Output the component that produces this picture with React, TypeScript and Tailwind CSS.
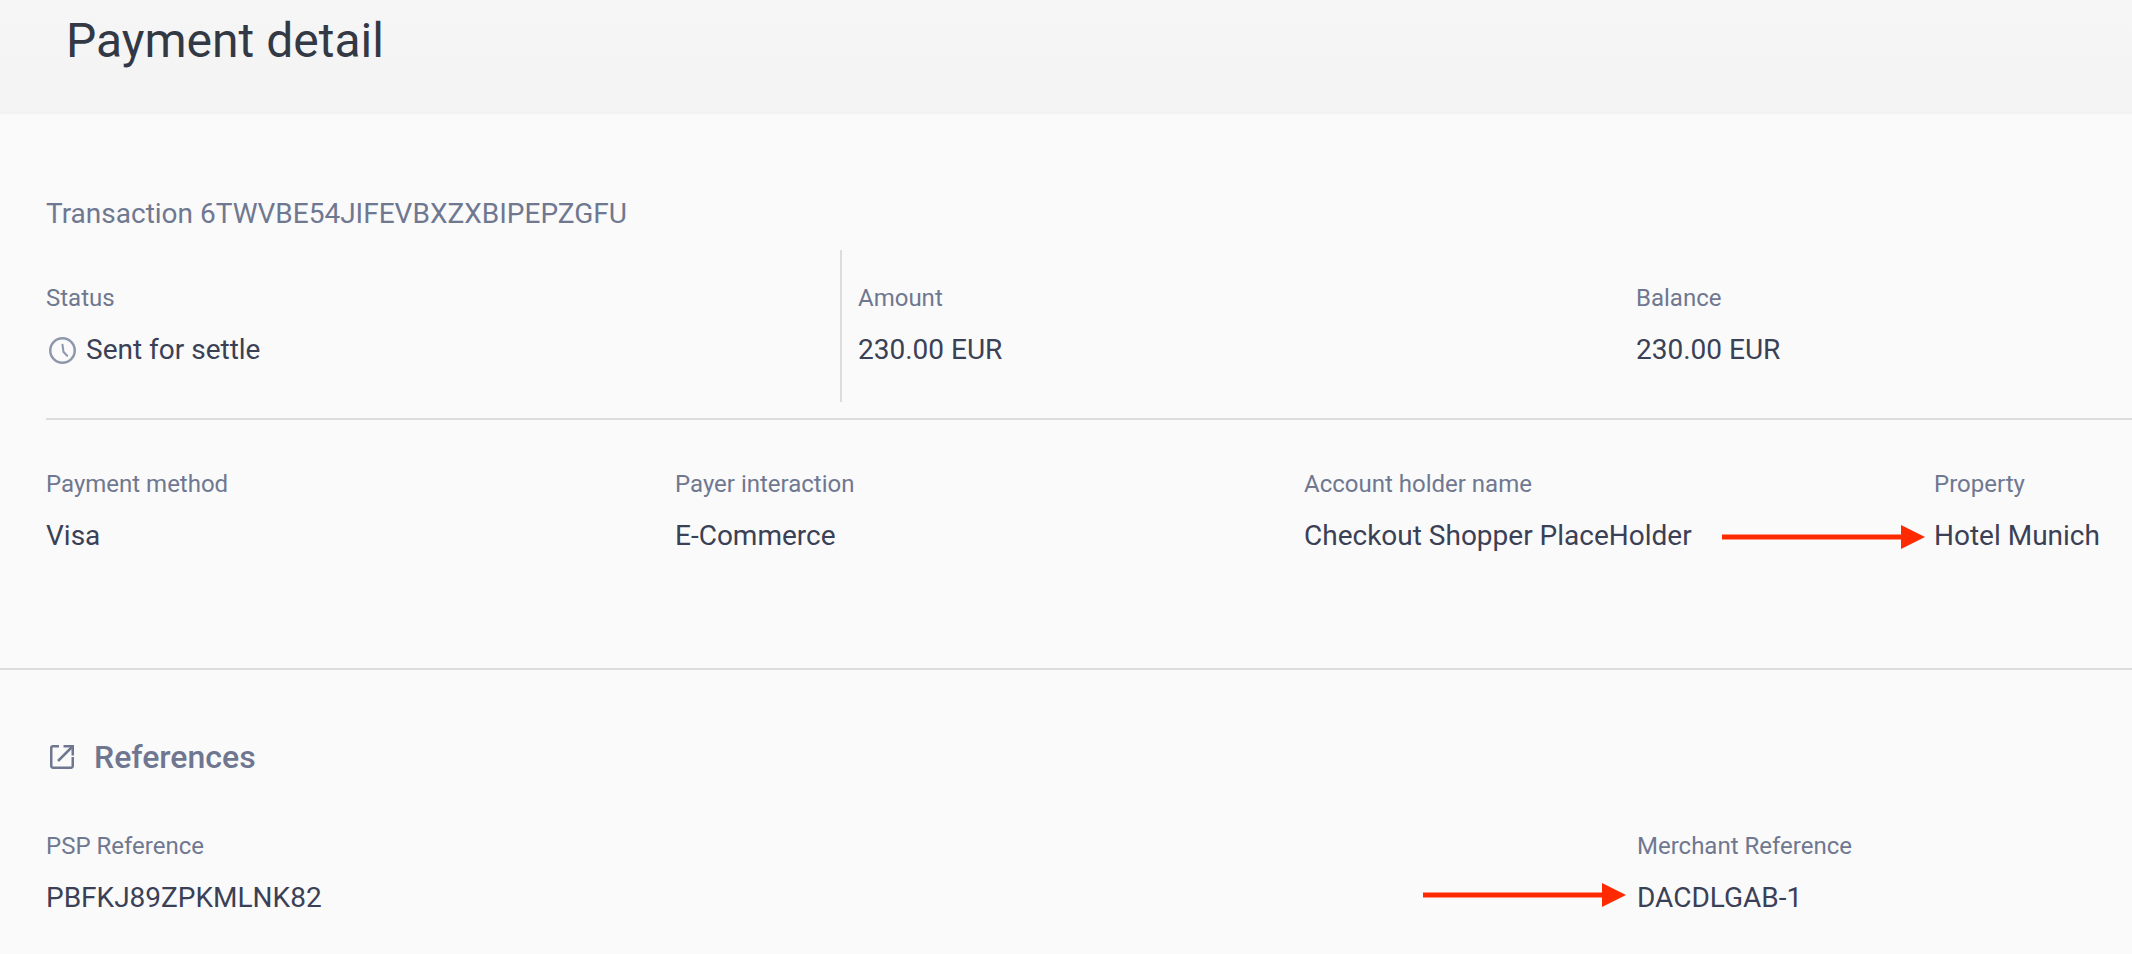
function Field({ label, value, className }: { label: string; value: string; className?: string }) {
  return (
    <div className={className}>
      <div className="text-[24px] leading-[30px] text-[#6f7890]">{label}</div>
      <div className="mt-[19px] text-[28px] leading-[36px] text-[#3a4156] whitespace-nowrap">{value}</div>
    </div>
  );
}

function ClockIcon() {
  return (
    <svg width="27" height="27" viewBox="0 0 26 26" fill="none" stroke="#8f97ad" strokeWidth="2.4" strokeLinecap="round" strokeLinejoin="round">
      <circle cx="13" cy="13" r="11.8" />
      <path d="M13 7.5 L14 14.5 L17.5 18" strokeWidth="2" />
    </svg>
  );
}

function OpenIcon() {
  return (
    <svg width="24" height="24" viewBox="0 0 24 24" fill="none" stroke="#6f7690" strokeWidth="2.5">
      <path d="M9 1.25 H3 A1.75 1.75 0 0 0 1.25 3 V21 A1.75 1.75 0 0 0 3 22.75 H21 A1.75 1.75 0 0 0 22.75 21 V12" />
      <path d="M8 16 L22.5 1.5" />
      <path d="M13.5 1.25 H22.75 V10.5" />
    </svg>
  );
}

// red annotation arrow laid over the page
function Arrow({ className }: { className: string }) {
  return (
    <svg className={className} width="204" height="24" viewBox="0 0 204 24">
      <rect x="0" y="9.5" width="180" height="5" fill="#ff2a00" />
      <polygon points="179,0 203,12 179,24" fill="#ff2a00" />
    </svg>
  );
}

export default function App() {
  return (
    <div className="relative h-[954px] w-[2132px] overflow-hidden bg-[#fafafa] font-['Roboto',sans-serif]">
      <header className="h-[114px] bg-gradient-to-b from-[#f6f6f6] to-[#f3f3f3] pl-[66px] pt-[13px]">
        <h1 className="text-[48px] leading-[56px] text-[#333845]">Payment detail</h1>
      </header>

      <section className="h-[556px] border-b-2 border-[#dcdcdc] pl-[46px] pt-[84px]">
        <div className="h-[32px] text-[28px] leading-[32px] text-[#6f7890]">Transaction 6TWVBE54JIFEVBXZXBIPEPZGFU</div>
        <div className="mt-[20px] flex h-[152px]">
          <div className="w-[794px] shrink-0 pt-[33px]">
            <div className="text-[24px] leading-[30px] text-[#6f7890]">Status</div>
            <div className="mt-[19px] flex items-center gap-[10px] pl-[3px] text-[28px] leading-[36px] text-[#3a4156]">
              <ClockIcon />
              <span>Sent for settle</span>
            </div>
          </div>
          <div className="flex border-l-2 border-[#dcdcdc] pl-[16px] pt-[33px]">
            <Field label="Amount" value="230.00 EUR" className="w-[778px] shrink-0" />
            <Field label="Balance" value="230.00 EUR" className="w-[400px] shrink-0" />
          </div>
        </div>
        <div className="mt-[16px] h-[2px] bg-[#dcdcdc]" />
        <div className="mt-[49px] flex">
          <Field label="Payment method" value="Visa" className="w-[629px] shrink-0" />
          <Field label="Payer interaction" value="E-Commerce" className="w-[629px] shrink-0" />
          <Field label="Account holder name" value="Checkout Shopper PlaceHolder" className="w-[630px] shrink-0" />
          <Field label="Property" value="Hotel Munich" className="w-[300px] shrink-0" />
        </div>
      </section>

      <section className="pl-[46px] pt-[67px]">
        <div className="flex items-center gap-[20px] pl-[4px]">
          <OpenIcon />
          <h2 className="text-[32px] leading-[40px] font-medium text-[#6f7690]">References</h2>
        </div>
        <div className="mt-[54px] flex">
          <Field label="PSP Reference" value="PBFKJ89ZPKMLNK82" className="w-[1591px] shrink-0" />
          <Field label="Merchant Reference" value="DACDLGAB-1" className="w-[400px] shrink-0" />
        </div>
      </section>

      <Arrow className="absolute left-[1722px] top-[525px]" />
      <Arrow className="absolute left-[1423px] top-[883px]" />
    </div>
  );
}
